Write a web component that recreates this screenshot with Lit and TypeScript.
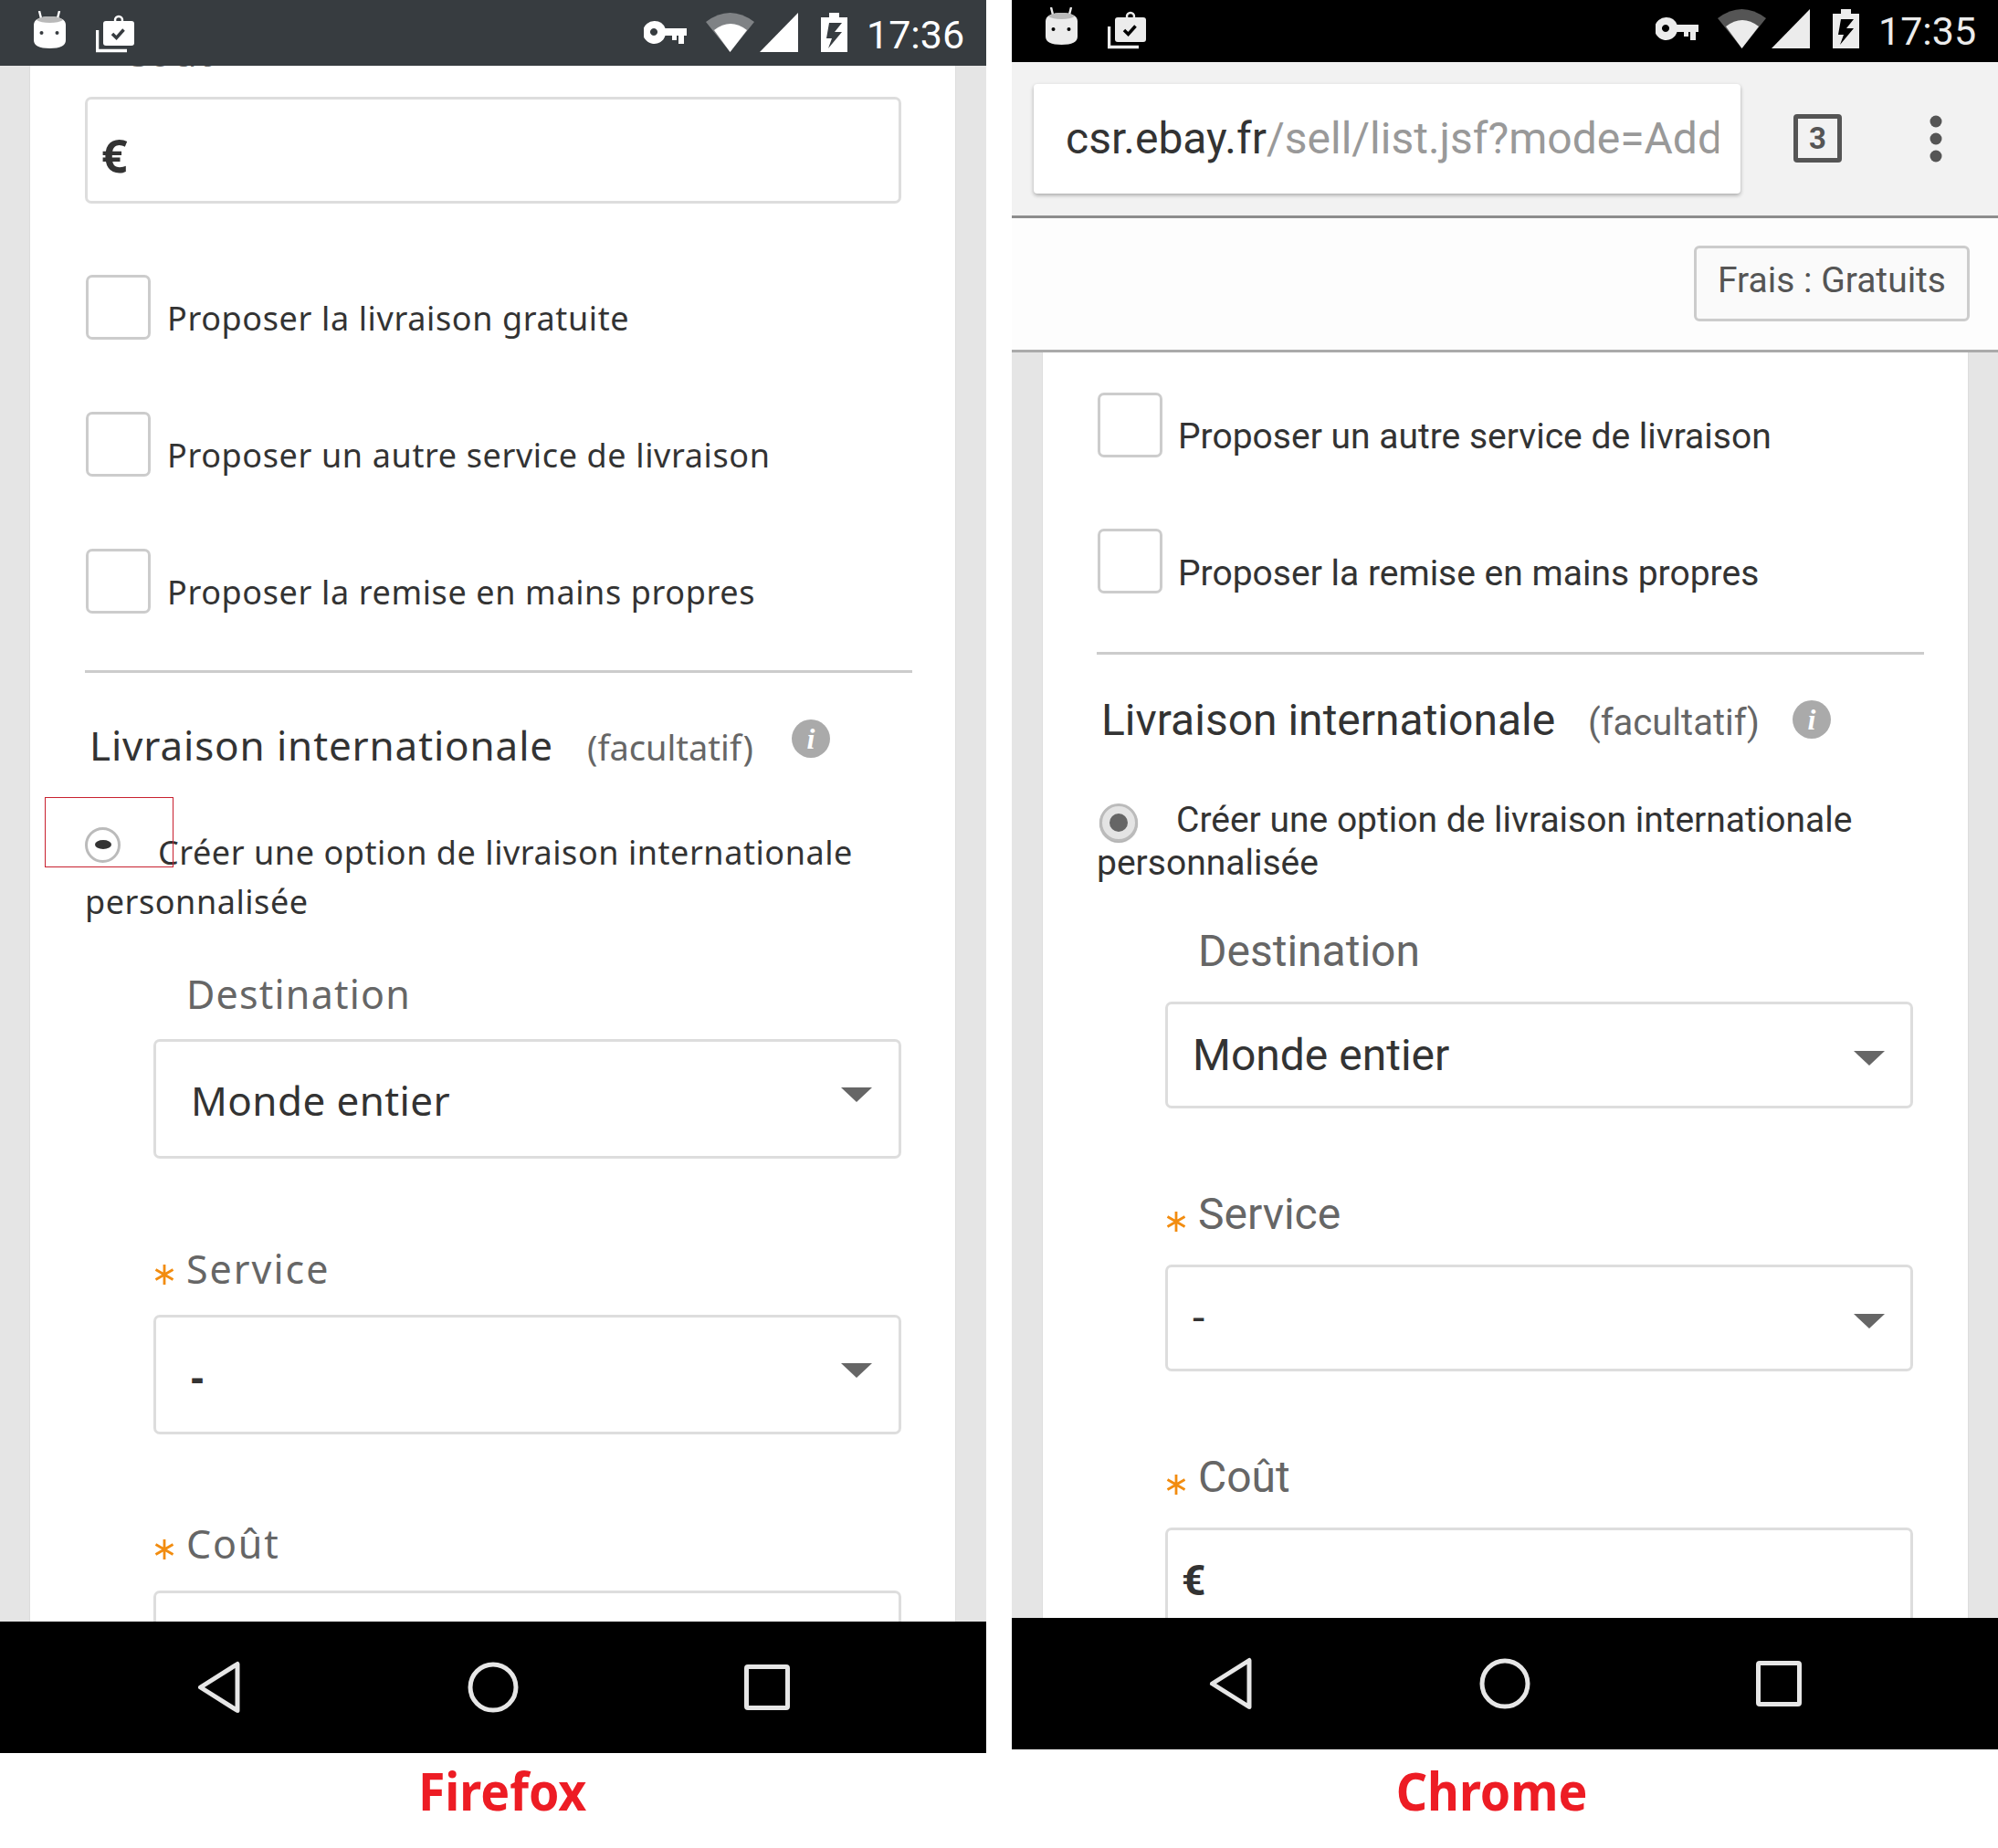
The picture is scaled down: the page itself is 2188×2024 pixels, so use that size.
import { LitElement, html, css } from "lit";
import { customElement } from "lit/decorators.js";

const androidIcon = html`<svg class="ic-android" viewBox="36 12 38 42" width="38" height="42">
  <path d="M43 12l2 8M65 12l-2 8" stroke="currentColor" stroke-width="2.4" fill="none"/>
  <path d="M37 27c0-6 8-9 17.500-9s17.500 3 17.500 9v17c0 6-6 9-17.500 9S37 50 37 44z" fill="currentColor"/>
  <path d="M40 22c3-3 8-4 14.500-4s11.500 1 14.500 4c-3 2-8 3-14.500 3S43 24 40 22z" fill="#b9b9b9"/>
  <circle cx="45.500" cy="36" r="2" class="hole"/><circle cx="62.500" cy="36" r="2" class="hole"/>
</svg>`;

const clipIcon = html`<svg class="ic-clip" viewBox="105 16 44 42" width="44" height="42">
  <path d="M106.500 33v22.500H139" stroke="currentColor" stroke-width="3.500" fill="none"/>
  <rect x="113" y="23" width="34" height="27" rx="3" fill="currentColor"/>
  <circle cx="130" cy="22" r="4" fill="none" stroke="currentColor" stroke-width="2.500"/>
  <path d="M123 37l4.500 4.500 8-9" class="stroke-hole" fill="none" stroke-width="3.500"/>
</svg>`;

const rightIcons = html`<svg class="ic-right" viewBox="705 12 224 46" width="224" height="46">
  <path fill-rule="evenodd" fill="currentColor" d="M717 23a12.500 12.500 0 0 1 11.500 8H752v8h-3v9h-6v-9h-2v5h-5v-5h-7.500a12.500 12.500 0 1 1-11.500-16zm-1 8a4 4 0 1 0 .01 0z"/>
  <path class="dim" d="M773 24Q799.500 4 826 24L799.500 57Z"/>
  <path fill="currentColor" d="M782 33Q800 19 818 33L799.500 57Z"/>
  <path fill="currentColor" d="M832 57L874 14V57Z"/>
  <path fill="currentColor" d="M908 14h11v5h9v38h-29V19h9z"/>
  <path class="hole" d="M908 25h14l-8 10h8l-15 18 4-11h-6z"/>
</svg>`;

const star = html`<svg class="star" viewBox="0 0 22 22" width="22" height="22">
  <path d="M11 0V22M1.500 5.500L20.500 16.500M20.500 5.500L1.500 16.500" stroke="#f28c0f" stroke-width="2.800" fill="none"/>
</svg>`;

const navBar = html`<div class="nav">
  <svg viewBox="0 0 48 58" width="48" height="58"><path d="M44 3.500V54.500L3.500 29Z" fill="none" stroke="#e6e6e6" stroke-width="5" stroke-linejoin="round"/></svg>
  <svg viewBox="0 0 56 56" width="56" height="56"><circle cx="28" cy="28" r="25" fill="none" stroke="#e6e6e6" stroke-width="5"/></svg>
  <svg viewBox="0 0 50 50" width="50" height="50"><rect x="2.500" y="2.500" width="45" height="45" rx="1.500" fill="none" stroke="#e6e6e6" stroke-width="5"/></svg>
</div>`;

const arrow = html`<svg class="arrow" viewBox="0 0 34 16" width="34" height="16"><path d="M0 0H34L17 16Z" fill="#666"/></svg>`;

function check(cls: string, text: string) {
  return html`<div class="check ${cls}"><span class="box"></span><span class="check-text">${text}</span></div>`;
}

function form() {
  return html`
    ${check("c2", "Proposer un autre service de livraison")}
    ${check("c3", "Proposer la remise en mains propres")}
    <div class="rule"></div>
    <div class="heading"><span class="h-main">Livraison internationale</span><span class="fac">(facultatif)</span><span class="info"><span class="info-i">i</span></span></div>
    <div class="para"><span class="radio"><span class="dot"></span></span>Créer une option de livraison internationale personnalisée<span class="redbox"></span></div>
    <div class="label dest">Destination</div>
    <div class="select sel1"><span>Monde entier</span>${arrow}</div>
    <div class="label svc">${star}<span>Service</span></div>
    <div class="select sel2"><span class="dash">-</span>${arrow}</div>
    <div class="label cost">${star}<span>Coût</span></div>
    <div class="money money2">€</div>
  `;
}

@customElement("app-root")
export class AppRoot extends LitElement {
  static styles = css`
    :host { display: block; width: 2188px; height: 2024px; background: #fff; overflow: hidden; }
    .root { display: flex; gap: 28px; width: 2188px; height: 2024px; }
    .col { width: 1080px; display: flex; flex-direction: column; }
    .phone { width: 1080px; display: flex; flex-direction: column; overflow: hidden; }
    .ff .phone { height: 1920px; font-family: "Noto Sans", sans-serif; }
    .ch .phone { height: 1916px; font-family: Roboto, sans-serif; }

    .status { display: flex; align-items: flex-start; color: #fff; flex: none; box-sizing: border-box; }
    .ff .status { height: 72px; background: #373c40; padding-top: 12px; }
    .ch .status { height: 68px; background: #000; padding-top: 8px; color: #ececec; }
    .ic-android { margin-left: 36px; }
    .ic-clip { margin-left: 31px; margin-top: 4px; }
    .ic-right { margin-left: 556px; margin-top: 0; }
    .hole { fill: #373c40; }
    .stroke-hole { stroke: #373c40; }
    .ch .hole { fill: #000; }
    .ch .stroke-hole { stroke: #000; }
    .dim { fill: #7f8285; }
    .ch .dim { fill: #555; }
    .time { font: 400 43px/50px Roboto, sans-serif; margin-left: 20px; margin-top: 1px; }

    .toolbar { flex: none; height: 168px; background: #f2f2f2; display: flex; align-items: flex-start; border-bottom: 3px solid #8d8d8d; }
    .url { margin: 24px 0 0 24px; width: 774px; height: 120px; box-sizing: border-box; background: #fff; border-radius: 4px; box-shadow: 0 2px 4px rgba(0,0,0,.3); padding: 30px 24px 0 35px; }
    .url-clip { overflow: hidden; white-space: nowrap; font-size: 48px; line-height: 60px; color: #999; }
    .url-clip b { font-weight: 400; color: #333; }
    .tab { margin: 57px 0 0 58px; width: 53px; height: 53px; box-sizing: border-box; border: 5px solid #555; border-radius: 4px; display: flex; align-items: center; justify-content: center; font-weight: 700; font-size: 33px; color: #555; }
    .dots { margin: 58px 0 0 96px; }

    .feebar { flex: none; height: 144px; background: #fdfdfd; border-bottom: 3px solid #aaa; display: flex; justify-content: flex-end; align-items: flex-start; }
    .fee { margin: 30px 31px 0 0; height: 83px; width: 302px; box-sizing: border-box; border: 3px solid #ccc; border-radius: 6px; background: #fafafa; color: #555; font-size: 39px; line-height: 50px; padding: 10px 0 0 23px; }

    .content { flex: 1; min-height: 0; background: #e5e5e5; overflow: hidden; }
    .card { display: flow-root; background: #fff; color: #333; border-left: 1px solid #ddd; border-right: 1px solid #ddd; box-sizing: border-box; min-height: 100%; }
    .ff .card { margin: 0 33px 0 32px; padding-left: 61px; width: 1015px; }
    .ch .card { margin: 0 32px 0 33px; padding-left: 59px; width: 1015px; }

    .stub { font-size: 43px; line-height: 50px; margin: -40px 0 0 40px; color: #666; letter-spacing: 1px; }

    .money { box-sizing: border-box; border: 3px solid #ddd; border-radius: 7px; font-weight: 700; line-height: 60px; }
    .ff .money { height: 117px; width: 894px; padding: 31px 0 0 15px; font-size: 50px; margin-left: -1px; }
    .ch .money { height: 117px; padding: 25px 0 0 15px; margin-left: 75px; width: 819px; font-size: 46px; }
    .ff .money2 { margin-left: 74px; width: 819px; margin-top: 26px; }
    .ff .money1 { margin-top: 24px; }
    .ch .money2 { margin-top: 27px; }

    .check { display: flex; align-items: flex-start; height: 71px; }
    .box { flex: none; width: 71px; height: 71px; box-sizing: border-box; border: 3px solid #ccc; border-radius: 7px; background: #fff; }
    .check-text { white-space: nowrap; }
    .ff .check-text { font-size: 36px; line-height: 48px; letter-spacing: .62px; margin: 24px 0 0 18px; }
    .ch .check-text { font-size: 39px; line-height: 47px; margin: 25px 0 0 17px; }
    .ch .c3 .check-text { margin-top: 26px; }
    .ch .check { margin-left: 1px; }
    .ff .c1 { margin-top: 78px; }
    .ff .c2, .ff .c3 { margin-top: 79px; }
    .ch .c2 { margin-top: 44px; }
    .ch .c3 { margin-top: 78px; }

    .rule { height: 3px; width: 906px; background: #ccc; }
    .ff .rule { margin-top: 62px; margin-left: -1px; }
    .ch .rule { margin-top: 64px; }

    .heading { display: flex; align-items: baseline; height: 56px; }
    .h-main { white-space: nowrap; flex: none; line-height: 56px; }
    .fac { color: #666; white-space: nowrap; flex: none; line-height: 56px; }
    .ff .heading { margin-top: 51px; }
    .ch .heading { margin-top: 44px; }
    .ff .h-main { font-size: 44px; margin-left: 4px; width: 545px; letter-spacing: .85px; }
    .ch .h-main { font-size: 48px; margin-left: 5px; width: 533px; }
    .ff .fac { font-size: 38px; width: 224px; }
    .ch .fac { font-size: 40px; width: 224px; }
    .info { flex: none; align-self: flex-start; width: 42px; height: 42px; border-radius: 50%; background: #aaa; display: flex; align-items: center; justify-content: center; }
    .ch .info { margin-top: 6px; }
    .info-i { color: #fff; font: italic 700 32px/42px "Liberation Serif", serif; }

    .para { position: relative; width: 892px; }
    .ff .para { font-size: 36px; line-height: 54px; letter-spacing: .55px; margin: 63px 0 0 -1px; }
    .ch .para { font-size: 39px; line-height: 47px; margin-top: 58px; width: 906px; }
    .radio { display: inline-flex; align-items: center; justify-content: center; box-sizing: border-box; border-radius: 50%; }
    .ff .radio { width: 39px; height: 39px; border: 3px solid #bbb; background: #fff; margin: -4px 41px 0 0; vertical-align: 17px; }
    .ch .radio { width: 42px; height: 42px; border: 3px solid #bbb; background: #e4e4e4; margin: 0 42px -12px 3px; box-shadow: 0 1px 1px #aaa; }
    .dot { border-radius: 50%; }
    .ff .dot { width: 18px; height: 10px; background: #333; }
    .ch .dot { width: 20px; height: 20px; background: #666; }
    .redbox { display: none; }
    .ff .redbox { display: block; position: absolute; left: -44px; top: -34px; width: 141px; height: 77px; box-sizing: border-box; border: 1px solid #c8202f; }

    .label { color: #666; white-space: nowrap; display: flex; align-items: center; }
    .ff .label { font-size: 43px; line-height: 50px; letter-spacing: 1.2px; height: 50px; margin-left: 75px; gap: 13px; }
    .ch .label { font-size: 48px; line-height: 56px; height: 56px; margin-left: 76px; gap: 13px; }
    .ff .label.dest { margin-left: 110px; margin-top: 49px; }
    .ch .label.dest { margin-left: 111px; margin-top: 45px; }
    .ff .label.svc { margin-top: 96px; letter-spacing: 2px; }
    .ch .label.svc { margin-top: 88px; }
    .ff .label.cost { margin-top: 95px; letter-spacing: 1.8px; }
    .ch .label.cost { margin-top: 88px; }
    .star { flex: none; margin-top: 12px; }
    .ch .star { margin-top: 15px; }

    .select { box-sizing: border-box; border: 3px solid #ddd; border-radius: 7px; width: 819px; display: flex; justify-content: space-between; align-items: flex-start; color: #333; }
    .ff .select { height: 131px; margin-left: 74px; font-size: 44px; line-height: 60px; padding: 34px 29px 0 38px; letter-spacing: .4px; }
    .ch .select { height: 117px; margin-left: 75px; font-size: 48px; line-height: 60px; padding: 26px 28px 0 27px; }
    .ff .sel1 { margin-top: 24px; }
    .ff .sel2 { margin-top: 25px; }
    .ch .sel1 { margin-top: 27px; }
    .ch .sel2 { margin-top: 27px; }
    .ff .arrow { margin-top: 16px; }
    .ch .arrow { margin-top: 25px; }
    .ff .dash { font-weight: 700; }

    .nav { flex: none; height: 144px; background: #000; display: grid; grid-template-columns: repeat(3, 300px); padding: 0 90px; justify-items: center; align-items: center; }

    .caption { text-align: center; color: #ed1c24; font: 700 57px/70px "Noto Sans", sans-serif; }
    .caption span { display: inline-block; transform: scaleX(.94); }
    .ff .caption { margin-top: 6px; padding-left: 20px; }
    .ch .caption { margin-top: 10px; padding-right: 28px; }
  `;

  render() {
    return html`<div class="root">
      <div class="col ff">
        <div class="phone">
          <div class="status">${androidIcon}${clipIcon}${rightIcons}<span class="time">17:36</span></div>
          <div class="content"><div class="card">
            <div class="stub">Coût</div>
            <div class="money money1">€</div>
            ${check("c1", "Proposer la livraison gratuite")}
            ${form()}
          </div></div>
          ${navBar}
        </div>
        <div class="caption"><span>Firefox</span></div>
      </div>
      <div class="col ch">
        <div class="phone">
          <div class="status">${androidIcon}${clipIcon}${rightIcons}<span class="time">17:35</span></div>
          <div class="toolbar">
            <div class="url"><div class="url-clip"><b>csr.ebay.fr</b>/sell/list.jsf?mode=Add</div></div>
            <div class="tab">3</div>
            <svg class="dots" viewBox="0 0 14 52" width="14" height="52" fill="#555"><circle cx="7" cy="7" r="6.500"/><circle cx="7" cy="26" r="6.500"/><circle cx="7" cy="45" r="6.500"/></svg>
          </div>
          <div class="feebar"><div class="fee">Frais : Gratuits</div></div>
          <div class="content"><div class="card">${form()}</div></div>
          ${navBar}
        </div>
        <div class="caption"><span>Chrome</span></div>
      </div>
    </div>`;
  }
}
